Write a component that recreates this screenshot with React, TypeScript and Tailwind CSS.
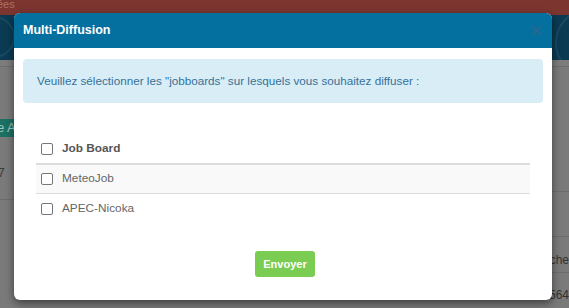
import React from "react";

function Box() {
  return (
    <span className="inline-block w-[12px] h-[12px] rounded-[2px] border border-[#767676] bg-white shrink-0" />
  );
}

export default function App() {
  const font = { fontFamily: '"Liberation Sans", Arial, sans-serif' };
  return (
    <div className="relative w-[569px] h-[308px] overflow-hidden bg-[#7a7a7a]" style={font}>
      {/* Background page (dimmed) */}
      <div className="flex flex-col w-full h-full">
        <div className="h-[15px] bg-[#7d3530] text-[11px] leading-[8px] text-[#a9716c] overflow-hidden">
          <span className="-ml-[3px]">ées</span>
        </div>
        <div className="relative h-[45px] bg-[#0b3a53] overflow-hidden">
          <svg className="absolute left-0 top-0" width="569" height="45" viewBox="0 0 569 45">
            <circle cx="-6" cy="22" r="20" fill="none" stroke="#184a63" strokeWidth="2" />
            <circle cx="590" cy="28" r="34" fill="none" stroke="#184a63" strokeWidth="2" />
            <circle cx="600" cy="20" r="22" fill="none" stroke="#174760" strokeWidth="1.5" />
          </svg>
        </div>
        <div className="h-[7px] bg-[#7c7c7c] border-b border-[#6d6d6d]" />
        <div className="flex justify-between flex-1 min-h-0">
          <div className="flex flex-col w-[40px]">
            <div className="h-[52px]" />
            <div className="h-[18px] bg-[#1c7064] text-[#9cc6bf] text-[13px] leading-[18px] -ml-[3px]">e A</div>
            <div className="h-[29px]" />
            <div className="text-[12px] leading-[14px] text-[#3b3b3b] -ml-[2px]">7</div>
            <div className="h-[20px] border-b border-[#6d6d6d]" />
          </div>
          <div className="flex flex-col w-[40px] items-end">
            <div className="h-[125px] w-full border-b border-[#6d6d6d] shrink-0" />
            <div className="h-[45px] w-full border-b border-[#6d6d6d] shrink-0" />
            <div className="h-[36px] w-full border-b border-[#6d6d6d] text-[12px] leading-[14px] text-[#333] flex items-end justify-end pb-[5px] shrink-0">che</div>
            <div className="h-[35px] w-full text-[12px] leading-[14px] text-[#333] flex items-start justify-end pt-[15px] shrink-0">564</div>
          </div>
        </div>
      </div>

      {/* Modal */}
      <div className="absolute left-[14px] top-[13px] w-[538px] h-[287px] rounded-[6px] bg-white shadow-[0_3px_9px_rgba(0,0,0,0.5)] flex flex-col overflow-hidden">
        <div className="h-[35px] bg-[#0470a0] flex items-center justify-between px-[9px] shrink-0">
          <span className="text-white font-bold text-[12.5px]">Multi-Diffusion</span>
          <svg width="11" height="11" viewBox="0 0 11 11" className="mr-[1px]">
            <path d="M1 1 L10 10 M10 1 L1 10" stroke="#2a6890" strokeWidth="2" />
          </svg>
        </div>
        <div className="flex flex-col px-[9px] pt-[11px]">
          <div className="h-[44px] rounded-[4px] bg-[#d9edf7] flex items-center pl-[14px] text-[11.7px] text-[#35729a]">
            Veuillez sélectionner les "jobboards" sur lesquels vous souhaitez diffuser :
          </div>
          <div className="mx-[13px] mt-[32px] flex flex-col text-[11.8px]">
            <div className="h-[30px] flex items-center gap-[9px] pl-[5px] border-b-2 border-[#dddddd] font-bold text-[#555]">
              <Box />
              <span>Job Board</span>
            </div>
            <div className="h-[29px] flex items-center gap-[9px] pl-[5px] bg-[#f9f9f9] border-b border-[#dddddd] text-[#666]">
              <Box />
              <span>MeteoJob</span>
            </div>
            <div className="h-[29px] flex items-center gap-[9px] pl-[5px] text-[#666]">
              <Box />
              <span>APEC-Nicoka</span>
            </div>
          </div>
          <div className="flex justify-center mt-[28px] pl-[4px]">
            <button className="w-[60px] h-[26px] rounded-[3px] bg-[#7acc52] text-white font-bold text-[11px]">
              Envoyer
            </button>
          </div>
        </div>
      </div>
    </div>
  );
}
